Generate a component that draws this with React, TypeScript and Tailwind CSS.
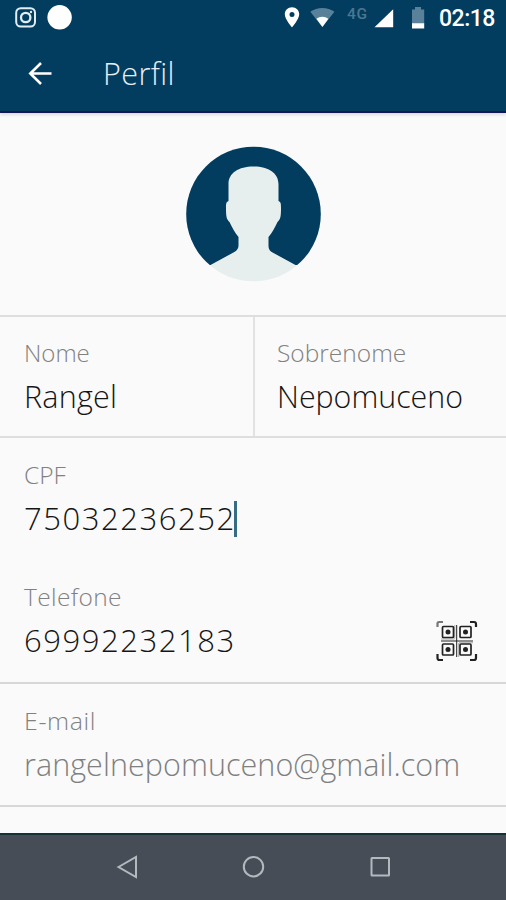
import type { ReactNode } from "react";

function StatusBar() {
  return (
    <div className="flex h-9 justify-between text-white">
      <svg width="90" height="36" fill="none">
        <rect x="16.2" y="8.2" width="18.8" height="18.3" rx="4.5" stroke="#e1edf2" strokeWidth="2" />
        <circle cx="25.7" cy="17.5" r="4.7" stroke="#e1edf2" strokeWidth="2.3" />
        <circle cx="31" cy="12" r="1.2" fill="#e1edf2" />
        <circle cx="59.6" cy="17.3" r="12.2" fill="#fff" />
      </svg>
      <div className="flex">
        <svg width="156" height="36" viewBox="280 0 156 36">
          <path fillRule="evenodd" d="M292 7.3c-4.1 0-7.2 3.1-7.2 7 0 5.1 7.2 13 7.2 13s7.2-7.9 7.2-13c0-3.9-3.1-7-7.2-7Zm0 4.7a2.5 2.5 0 1 1 0 5 2.5 2.5 0 0 1 0-5Z" fill="#fff" />
          <path d="M310.3 11.8c6.8-5.2 17.3-5.2 24.1 0L322.4 27Z" fill="#59829a" />
          <path d="M316.4 18.8c3.5-2.9 8.5-2.9 12 0l-6 8.2Z" fill="#fff" />
          <text x="347" y="18.6" fill="#4b7790" fontSize="15.5" fontWeight="500" fontFamily="Roboto, sans-serif" letterSpacing=".7">4G</text>
          <path d="M374.5 27.3h18.7V9.3Z" fill="#fff" />
          <path d="M412 9.5h3V7h6v2.5h3.2v14H412Z" fill="#59829a" />
          <path d="M412 23.2h12.2v5.3H412Z" fill="#fff" />
        </svg>
        <span className="w-[70px] pl-[3px] pt-[1px] font-[Roboto,sans-serif] text-[23px] font-medium leading-9 tracking-[-0.5px]">02:18</span>
      </div>
    </div>
  );
}

function Field({ label, children, tail }: { label: ReactNode; children: ReactNode; tail?: ReactNode }) {
  return (
    <div className="flex h-full items-start justify-between pl-6">
      <div className="pt-[18px]">
        <div className="h-9 whitespace-nowrap text-[24.5px] leading-9 text-[#818181]">{label}</div>
        <div className="flex h-[51px] items-center whitespace-nowrap text-[30.5px] leading-[51px]">{children}</div>
      </div>
      {tail}
    </div>
  );
}

function QrIcon() {
  return (
    <svg className="mr-7 mt-[59px]" width="42" height="42" viewBox="0 0 42 42" fill="none" stroke="#222">
      <path d="M1.5 7V3.5Q1.5 2 3 2h4" stroke="#777" strokeWidth="2.2" />
      <path d="M34 2h4q2 0 2 2v3M1.5 34v4q0 2 2 2H7M34 40h4q2 0 2-2v-4" strokeWidth="2.2" />
      <path d="M20.7 5v32M5 21h32" strokeWidth="1" />
      <path d="M18.8 5v13.5M22.7 23v14M5 19h13.5M23 22.8h14" stroke="#888" strokeWidth=".7" />
      {[[6.5, 6.5], [24, 6.5], [6.5, 24], [24, 24]].map(([x, y]) => (
        <g key={`${x}-${y}`}>
          <rect x={x} y={y} width="11" height="11" rx="1" strokeWidth="1.7" />
          <circle cx={x + 5.5} cy={y + 5.5} r="2.5" fill="#222" stroke="none" />
        </g>
      ))}
    </svg>
  );
}

export default function App() {
  return (
    <div className="flex h-[900px] w-[506px] flex-col overflow-hidden bg-[#fafafa] font-['Open_Sans','Noto_Sans',sans-serif] font-light text-[#151515]">
      <header className="h-[113px] shrink-0 border-b-2 border-[#11185a] bg-[#023d60] shadow-[0_2px_3px_#dadae3]">
        <StatusBar />
        <div className="flex h-[75px] items-center text-[#e7eef3]">
          <svg width="103" height="75" viewBox="0 36 103 75" fill="none" stroke="#fff" strokeWidth="2.6">
            <path d="M51.5 73.5H30M41 63 30.3 73.5 41 84" />
          </svg>
          <h1 className="text-[30.5px] leading-[75px] tracking-[0.4px]">Perfil</h1>
        </div>
      </header>
      <main className="flex min-h-0 flex-1 flex-col">
        <section className="flex h-[202px] justify-center pt-[33px]">
          <svg width="136" height="136" viewBox="-.5 0 136 136">
            <defs><clipPath id="avatar"><circle cx="68" cy="68" r="67.3" /></clipPath></defs>
            <path clipPath="url(#avatar)" fill="#023d60" d="M0 0h136v119H0z" />
            <path clipPath="url(#avatar)" fill="#e6eeee" d="M43 55V38c0-11 10-17.500 25-17.500S93 27 93 38v17c2.500 1 2.500 3 2.500 7 0 9-.5 11-3.500 14-3 6-5 10-9 15v8c0 4 1 6 5 8l22 12q6 3 10 8v25H15v-25q4-5 10-8l22-12c4-2 6-4 6-8v-8c-4-5-6-9-9-15-3-3-3.500-5-3.500-14 0-4 0-6 2.500-7Z" />
          </svg>
        </section>
        <section className="flex h-[123px] border-y-2 border-[#dedede]">
          <div className="w-[255px] border-r-2 border-[#e2e2e2]">
            <Field label={<span className="inline-block origin-left scale-x-[.98]">Nome</span>}>
              <span className="tracking-[0.2px]">Rangel</span>
            </Field>
          </div>
          <div className="-ml-[2px] flex-1">
            <Field label={<span className="inline-block">Sobrenome</span>}>
              <span className="origin-left scale-x-[.995]">Nepomuceno</span>
            </Field>
          </div>
        </section>
        <section className="h-[122px] pt-px">
          <Field label="CPF">
            <span className="w-[210px] text-[31px] tracking-[1.55px]">75032236252</span>
            <i className="h-9 w-[3px] bg-[#386b84]" />
          </Field>
        </section>
        <section className="h-[124px] border-b-2 border-[#d7d7d7] pt-px">
          <Field label={<span className="tracking-[0.35px]">Telefone</span>} tail={<QrIcon />}>
            <span className="text-[31px] tracking-[1.55px]">69992232183</span>
          </Field>
        </section>
        <section className="h-[123px] border-b-2 border-[#d7d7d7] pt-px">
          <Field label={<span className="inline-block origin-left scale-x-[1.02] tracking-[0.6px]">E-mail</span>}>
            <span className="tracking-[0.06px] text-[#808080]">rangelnepomuceno@gmail.com</span>
          </Field>
        </section>
      </main>
      <nav className="h-[67px] shrink-0 border-t-2 border-[#173237] bg-[#464d56]">
        <svg width="506" height="65" viewBox="0 835 506 65" fill="none" stroke="#b4b9be" strokeWidth="2">
          <path d="M118.5 867 136 857v20Z" />
          <circle cx="253.5" cy="866.7" r="9.7" />
          <rect x="371.5" y="858" width="17.5" height="17.5" rx=".5" />
        </svg>
      </nav>
    </div>
  );
}
